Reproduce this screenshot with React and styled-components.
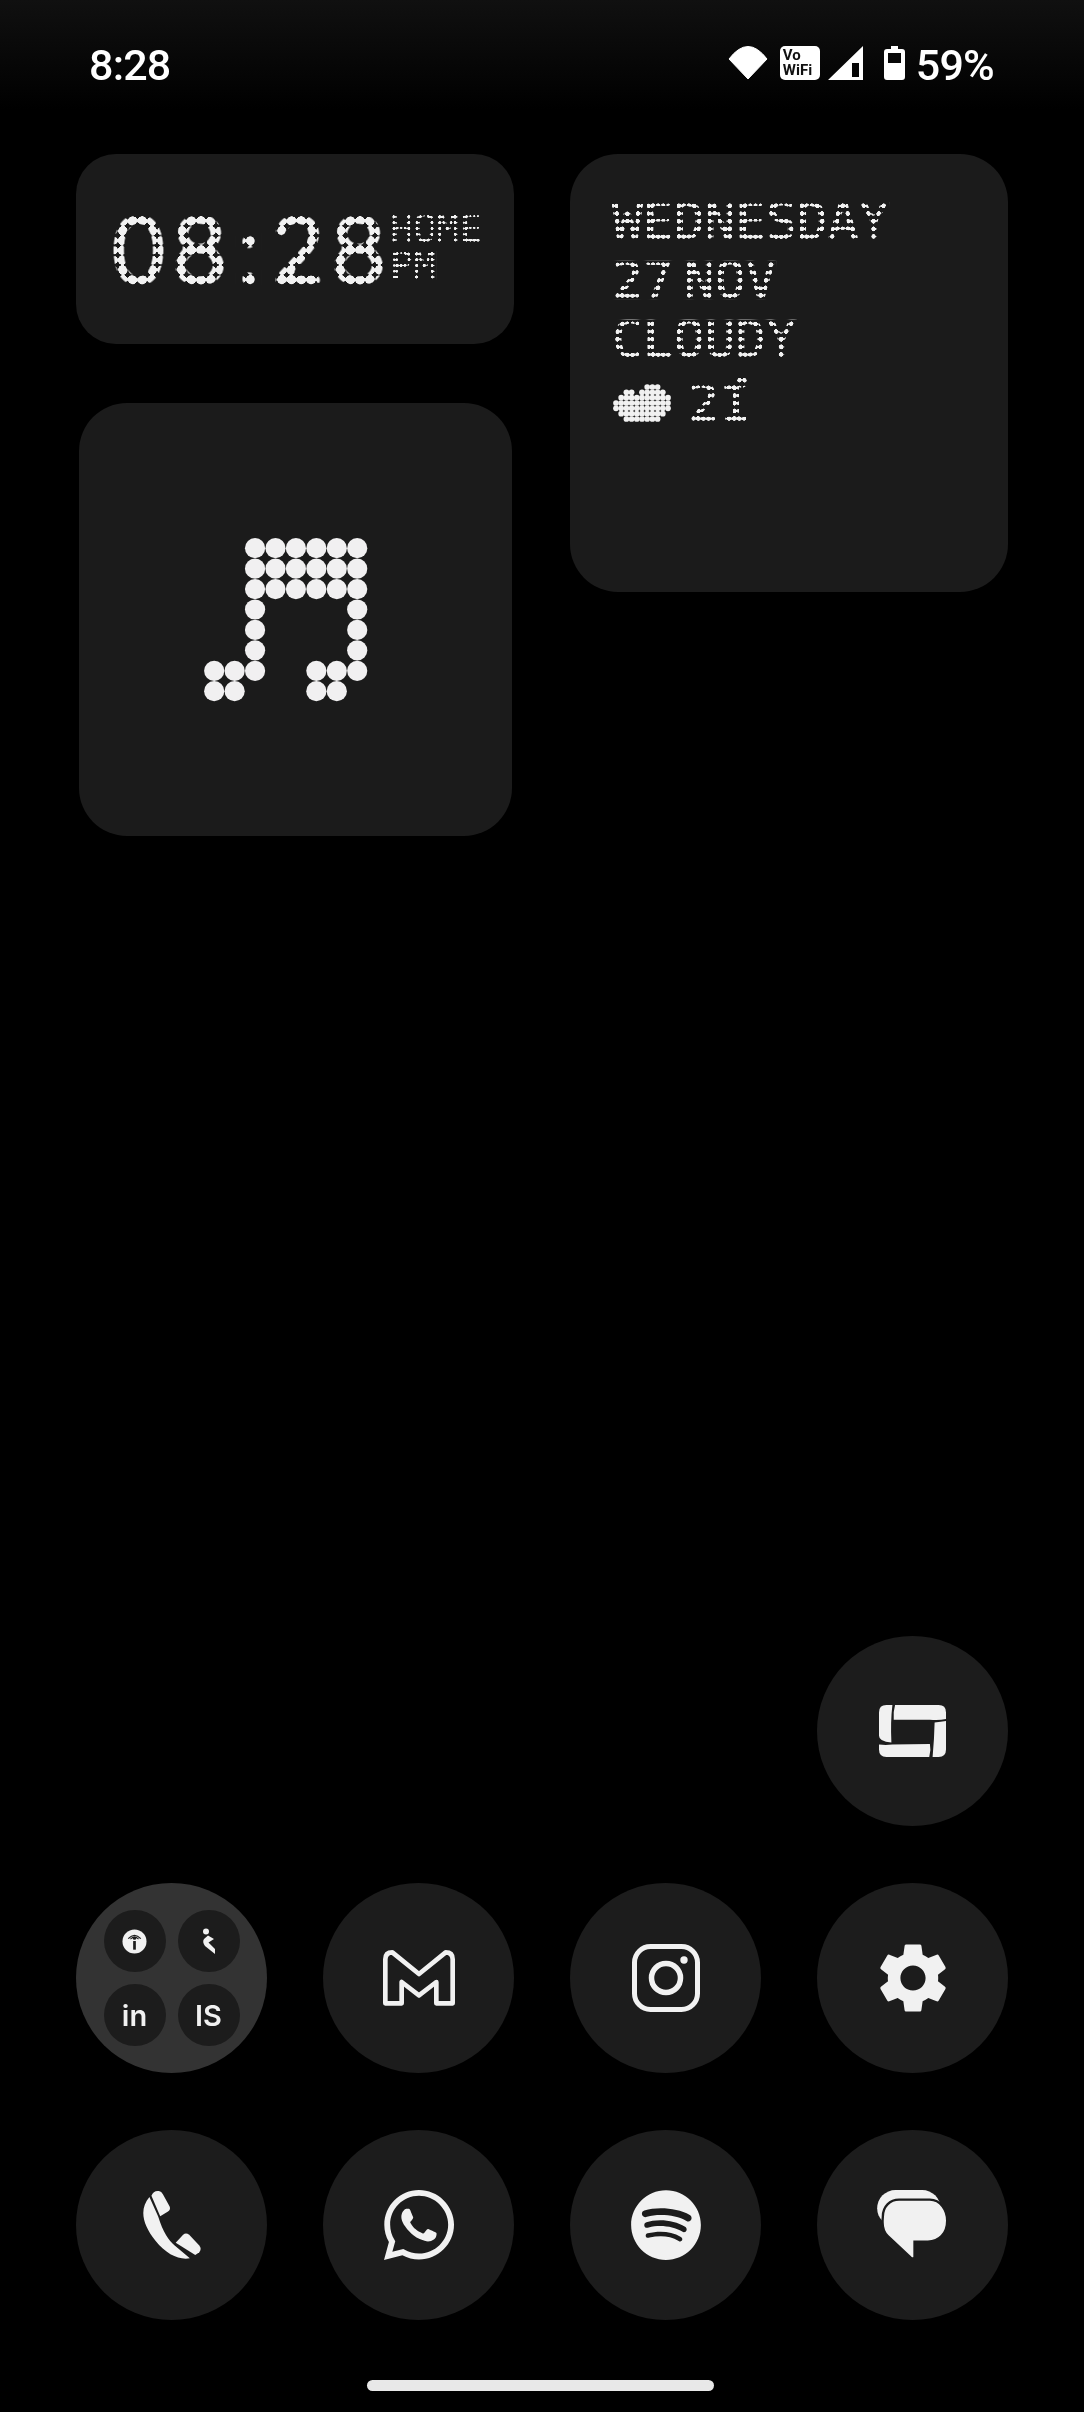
import React from "react";
import styled, { createGlobalStyle } from "styled-components";
import { MdSettings } from "react-icons/md";
import { FaWhatsapp, FaSpotify } from "react-icons/fa";

const Global = createGlobalStyle`
  html, body { margin: 0; padding: 0; background: #000; }
`;

const INK = "#f1f1f1";

const Page = styled.div`
  width: 1084px; height: 2412px; overflow: hidden; box-sizing: border-box;
  display: flex; flex-direction: column;
  background: linear-gradient(#101010 0, #000 110px);
  color: ${INK};
  font-family: Roboto, "Liberation Sans", sans-serif;
`;

const StatusBar = styled.div`
  height: 154px; box-sizing: border-box; padding: 46px 90px 0 89px;
  display: flex; justify-content: space-between; align-items: flex-start;
`;
const StatusText = styled.span`
  font-size: 43px; line-height: 38px; font-weight: 500; color: #fff; letter-spacing: -0.8px;
`;
const StatusIcons = styled.div`
  display: flex; align-items: flex-start; height: 34px;
`;
const VoWifi = styled.div`
  width: 40px; height: 34px; margin: 0 8px 0 12px; border-radius: 5px; background: #fff; color: #111;
  font: 700 15px/14.5px Roboto, sans-serif; padding: 2px 0 0 3px; box-sizing: border-box;
`;
const Percent = styled(StatusText)`margin-left: 11px;`;

const Widgets = styled.div`
  padding-left: 76px; display: grid; grid-template-columns: 438px 438px; column-gap: 56px;
`;
const LeftColumn = styled.div`display: flex; flex-direction: column; align-items: center;`;
const Card = styled.div`
  background: #1b1b1b; box-sizing: border-box;
  border-radius: ${p => p.$radius || 48}px;
`;
const ClockCard = styled(Card)`
  width: 438px; height: 190px; display: flex; align-items: flex-start;
  padding: 62px 0 0 32px;
`;
const MusicCard = styled(Card)`
  width: 433px; height: 433px; margin-top: 59px; padding-right: 19px;
  display: flex; align-items: center; justify-content: center;
`;
const WeatherCard = styled(Card)`
  width: 438px; height: 438px; padding: 48px 0 0 42px;
  display: flex; flex-direction: column; gap: 20.3px;
`;

/* Real text, blurred and thresholded through a grid of round spots, so it reads as whole dots */
const DotText = styled.span`
  display: block; position: relative; clip-path: inset(0); width: fit-content; white-space: pre;
  background: #000; isolation: isolate;
  filter: contrast(5) brightness(0.945);
  mix-blend-mode: screen;
  font-family: ${p => p.$family || '"DejaVu Sans Mono"'}, monospace;
  font-weight: ${p => p.$weight || 400};
  font-size: ${p => p.$size}px;
  line-height: ${p => p.$line}px;
  height: ${p => p.$line}px;
  word-spacing: ${p => p.$word || 0}px;
  font-variant-numeric: tabular-nums;
  --dot-blur: ${p => p.$blur}px;
  --dot-gain: ${p => p.$gain};
  --dot-stroke: ${p => p.$stroke || 0}px;
  &::after {
    content: ""; position: absolute; inset: 0; mix-blend-mode: multiply;
    background-image: radial-gradient(circle at center, #fff 0, #fff ${p => p.$r - 0.7}px, #000 ${p => p.$r + 0.7}px);
    background-size: ${p => p.$px}px ${p => p.$py}px;
    background-position: ${p => p.$ox || 0}px ${p => p.$oy || 0}px;
  }
`;
const Glyphs = styled.span`
  display: block; color: #fff;
  -webkit-text-stroke: var(--dot-stroke) #fff;
  filter: blur(var(--dot-blur)) brightness(var(--dot-gain));
`;
const ClockDigits = styled(DotText).attrs({
  $family: "Inter", $weight: 400, $size: 94, $line: 68.6, $px: 9.8, $py: 9.8, $r: 4.9, $stroke: 2, $blur: 3.2, $gain: 2,
})`
  margin-left: ${p => p.$gap || 0}px;
`;
const ClockTags = styled.div`
  margin: -2px 0 0 1px; display: flex; flex-direction: column; gap: 8px;
`;
const TinyDot = styled(DotText).attrs({ $size: 38.4, $line: 29, $px: 3.85, $py: 5.8, $r: 1.75, $ox: 1.6, $stroke: 0.8, $blur: 1.2, $gain: 2.3 })``;
const SmallDot = styled(DotText).attrs({ $size: 51.2, $line: 38.5, $px: 5.13, $py: 7.7, $r: 2.5, $ox: 2.6, $stroke: 1.2, $word: -20.5, $blur: 1.7, $gain: 2.2 })``;

const TempRow = styled.div`display: flex; align-items: flex-start; margin-top: 6px; margin-left: 1px;`;
const Temp = styled(SmallDot)`margin-left: 17px;`;
const Degree = styled(DotText).attrs({ $size: 30, $line: 38.5, $px: 5.13, $py: 7.7, $r: 2.5, $ox: 3.94, $oy: 5.35, $weight: 700, $stroke: 2, $blur: 1.5, $gain: 3.5 })`
  margin: -13px 0 0 -17px;
`;

const Dock = styled.div`
  margin-top: auto; padding-left: 76px;
  display: grid; grid-template-columns: repeat(4, 191px); grid-auto-rows: 190px; column-gap: 56px; row-gap: 57px;
`;
const AppCircle = styled.div`
  border-radius: 50%; background: #1c1c1c;
  display: flex; align-items: center; justify-content: center;
  grid-column: ${p => p.$col || "auto"};
  color: ${INK};
`;
const Folder = styled(AppCircle)`
  background: #333;
  display: grid; grid-template-columns: 62px 62px; grid-auto-rows: 62px; gap: 12px;
  align-items: stretch; align-content: center; justify-content: center;
`;
const MiniApp = styled.div`
  border-radius: 50%; background: #1c1c1c;
  display: flex; align-items: center; justify-content: center;
  font: 600 29px/1 Inter, sans-serif; color: ${INK};
`;
const HomeBar = styled.div`
  width: 347px; height: 11px; border-radius: 6px; background: #e8e8e8;
  margin: 60px 0 21px 367px;
`;

const Wifi = () => (
  <svg width="40" height="34" viewBox="0 0 40 34"><path d="M1 13 Q20 -12 39 13 L20 33 Z" fill="#fff" stroke="#fff" strokeLinejoin="round" /></svg>
);
const Signal = () => (
  <svg width="36" height="34" viewBox="0 0 36 34"><path fillRule="evenodd" d="M35 0 V34 H0 Z M24 17 V31 H31 V17 Z" fill="#fff" /></svg>
);
const Battery = () => (
  <svg width="21" height="34" viewBox="0 0 21 34" style={{ marginLeft: 20 }}>
    <path fillRule="evenodd" d="M7 0 H14 V3 H18 Q21 3 21 6 V31 Q21 34 18 34 H3 Q0 34 0 31 V6 Q0 3 3 3 H7 Z M4 7 V17 H17 V7 Z" fill="#fff" />
  </svg>
);

const NOTE = ["..######", "..######", "..######", "..#....#", "..#....#", "..#....#", "###..###", "##...##."];
const MusicNote = () => (
  <svg width="164" height="164" viewBox="0 0 164 164" fill="#f1f0f1">
    {NOTE.flatMap((row, y) => [...row].map((c, x) => c === "#" ? <circle key={`${x}-${y}`} cx={10.2 + x * 20.43} cy={10.2 + y * 20.43} r={10.1} /> : null))}
  </svg>
);

const CLOUD = ["......###..", "..##.#####.", ".##########", "###########", "###########", ".#########.", "..#######.."];
const Cloud = () => (
  <svg width="58" height="38" viewBox="0 0 58 38" fill="#f1f1f1">
    {CLOUD.flatMap((row, y) => [...row].map((c, x) => c === "#" ? <circle key={`${x}-${y}`} cx={3 + x * 5.2} cy={3 + y * 5.33} r={2.85} /> : null))}
  </svg>
);

const InfoIcon = () => (
  <svg width="25" height="25" viewBox="0 0 26 26">
    <circle cx="13" cy="13" r="12.5" fill="#f1f1f1" />
    <path d="M6.5 10 Q13 3 19.5 10" fill="none" stroke="#1c1c1c" strokeWidth="1.3" />
    <path d="M8.8 10.5 Q13 6 17.2 10.5" fill="none" stroke="#1c1c1c" strokeWidth="1.1" />
    <circle cx="13" cy="9.5" r="1.8" fill="#1c1c1c" />
    <rect x="11.6" y="12.5" width="2.8" height="9" fill="#1c1c1c" />
  </svg>
);
const KIcon = () => (
  <svg width="16" height="26" viewBox="0 0 16 26" fill="#f1f1f1">
    <circle cx="5" cy="3.5" r="3" />
    <path d="M7 7.5 L13 11 L7.5 14.5 L14 21 L14 26 L4 18 Q1 14 3 11 Z" />
  </svg>
);
const GmailIcon = () => (
  <svg width="72" height="56" viewBox="0 0 216 168"><path d="M7 160 V28 Q7 7 28 7 L108 72 L188 7 Q209 7 209 28 V160 H160 V96 L108 136 L56 96 V160 Z" fill="none" stroke="#f1f1f1" strokeWidth="14" strokeLinejoin="round" /></svg>
);
const MeetIcon = () => (
  <svg width="67" height="52" viewBox="0 0 200 155" fill="#f1f1f1">
    <path d="M40 0 H22 Q0 0 0 22 V92 Q0 110 37 112 Q34 50 40 0Z" />
    <path d="M48 0 H178 Q200 0 200 22 V42 Q180 46 152 44 H44 Q42 20 48 0 Z" />
    <path d="M166 52 Q185 50 200 48 V133 Q200 155 178 155 H160 Q165 100 166 52 Z" />
    <path d="M0 118 Q20 120 40 118 L152 116 Q156 135 150 155 H22 Q0 155 0 133 Z" />
  </svg>
);
const InstagramIcon = () => (
  <svg width="68" height="68" viewBox="0 0 68 68" fill="none" stroke="#f1f1f1">
    <rect x="2.5" y="2.5" width="63" height="63" rx="16" strokeWidth="5" />
    <circle cx="34" cy="34" r="14.5" strokeWidth="5.5" />
    <circle cx="52" cy="16" r="3.7" fill="#f1f1f1" stroke="none" />
  </svg>
);
const PhoneIcon = () => (
  <svg width="60" height="70" viewBox="0 0 178 206" fill="#f1f1f1">
    <path d="M22 20 C-8 55 0 100 40 150 C72 190 110 208 142 202 L96 163 C80 150 62 125 48 78 Z" />
    <path d="M28 16 Q34 0 50 2 Q58 3 62 12 L82 48 Q86 58 76 64 L54 77 Z" />
    <path d="M100 156 L122 132 Q130 124 140 132 L170 164 Q178 174 170 184 L158 192 Z" />
  </svg>
);
const MessagesIcon = () => (
  <svg width="71" height="70" viewBox="0 0 212 210" fill="#f1f1f1">
    <rect x="0" y="0" width="190" height="110" rx="55" />
    <path d="M66 29 H158 C190 29 210 60 210 92 C210 130 186 155 152 155 H112 V200 Q110 210 100 202 L32 138 C10 118 17 90 17 80 C17 50 38 29 66 29 Z" stroke="#1c1c1c" strokeWidth="7" />
  </svg>
);

export default function App() {
  return (
    <Page>
      <Global />
      <StatusBar>
        <StatusText>8:28</StatusText>
        <StatusIcons>
          <Wifi />
          <VoWifi>Vo<br />WiFi</VoWifi>
          <Signal />
          <Battery />
          <Percent>59%</Percent>
        </StatusIcons>
      </StatusBar>

      <Widgets>
        <LeftColumn>
          <ClockCard $radius={40}>
            <ClockDigits><Glyphs>08</Glyphs></ClockDigits>
            <ClockDigits $gap={6}><Glyphs>:</Glyphs></ClockDigits>
            <ClockDigits $gap={6}><Glyphs>28</Glyphs></ClockDigits>
            <ClockTags>
              <TinyDot><Glyphs>HOME</Glyphs></TinyDot>
              <TinyDot><Glyphs>PM</Glyphs></TinyDot>
            </ClockTags>
          </ClockCard>
          <MusicCard><MusicNote /></MusicCard>
        </LeftColumn>
        <WeatherCard>
          <SmallDot><Glyphs>WEDNESDAY</Glyphs></SmallDot>
          <SmallDot><Glyphs>27 NOV</Glyphs></SmallDot>
          <SmallDot><Glyphs>CLOUDY</Glyphs></SmallDot>
          <TempRow>
            <Cloud />
            <Temp><Glyphs>21</Glyphs></Temp>
            <Degree><Glyphs>°</Glyphs></Degree>
          </TempRow>
        </WeatherCard>
      </Widgets>

      <Dock>
        <AppCircle $col="4"><MeetIcon /></AppCircle>
        <Folder $col="1">
          <MiniApp><InfoIcon /></MiniApp>
          <MiniApp><KIcon /></MiniApp>
          <MiniApp>in</MiniApp>
          <MiniApp>IS</MiniApp>
        </Folder>
        <AppCircle><GmailIcon /></AppCircle>
        <AppCircle><InstagramIcon /></AppCircle>
        <AppCircle><MdSettings size={84} /></AppCircle>
        <AppCircle><PhoneIcon /></AppCircle>
        <AppCircle><FaWhatsapp size={80} /></AppCircle>
        <AppCircle><FaSpotify size={72} /></AppCircle>
        <AppCircle><MessagesIcon /></AppCircle>
      </Dock>
      <HomeBar />
    </Page>
  );
}
